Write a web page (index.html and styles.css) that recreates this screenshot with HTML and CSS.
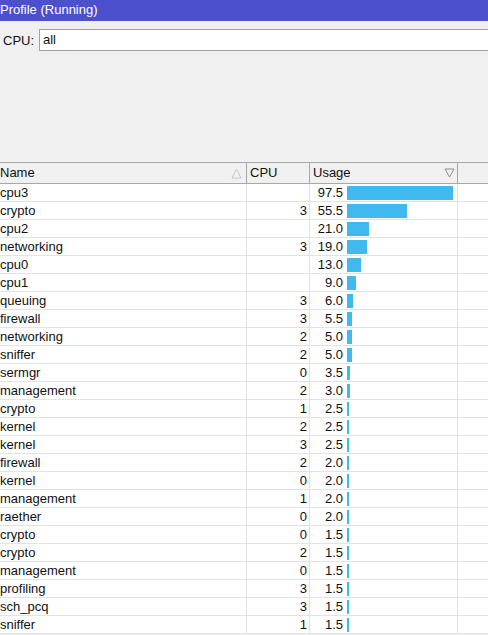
FILE: index.html
```html
<!DOCTYPE html>
<html lang="en">
<head>
    <meta charset="UTF-8">
    <meta name="viewport" content="width=device-width, initial-scale=1.0">
    <title>Profile (Running)</title>
    <link rel="stylesheet" href="styles.css">
</head>
<body>

    <!-- window title -->
    <div class="titlebar">Profile (Running)</div>

    <!-- cpu filter -->
    <div class="filter">
        <label for="cpu">CPU:</label>
        <div class="field" id="cpu">all</div>
    </div>

    <!-- profile table -->
    <div class="grid">
        <div class="head">
            <div class="cell name">Name
                <svg class="sort" width="11" height="11" viewBox="0 0 11 11"><path d="M5.5 1 L10 10 L1 10 Z" fill="none" stroke="#c9c9c9"/></svg>
            </div>
            <div class="cell">CPU</div>
            <div class="cell usage-head">Usage
                <svg class="sort" width="11" height="10" viewBox="0 0 11 10"><path d="M1 1 L10 1 L5.5 9 Z" fill="none" stroke="#8e8e8e"/></svg>
            </div>
            <div class="cell last"></div>
        </div>

        <div class="row"><div class="cell name">cpu3</div><div class="cell num"></div><div class="cell usage"><span class="val">97.5</span><span class="bar" style="width:106px"></span></div><div class="cell last"></div></div>
        <div class="row"><div class="cell name">crypto</div><div class="cell num">3</div><div class="cell usage"><span class="val">55.5</span><span class="bar" style="width:60px"></span></div><div class="cell last"></div></div>
        <div class="row"><div class="cell name">cpu2</div><div class="cell num"></div><div class="cell usage"><span class="val">21.0</span><span class="bar" style="width:22px"></span></div><div class="cell last"></div></div>
        <div class="row"><div class="cell name">networking</div><div class="cell num">3</div><div class="cell usage"><span class="val">19.0</span><span class="bar" style="width:20px"></span></div><div class="cell last"></div></div>
        <div class="row"><div class="cell name">cpu0</div><div class="cell num"></div><div class="cell usage"><span class="val">13.0</span><span class="bar" style="width:14px"></span></div><div class="cell last"></div></div>
        <div class="row"><div class="cell name">cpu1</div><div class="cell num"></div><div class="cell usage"><span class="val">9.0</span><span class="bar" style="width:9px"></span></div><div class="cell last"></div></div>
        <div class="row"><div class="cell name">queuing</div><div class="cell num">3</div><div class="cell usage"><span class="val">6.0</span><span class="bar" style="width:6px"></span></div><div class="cell last"></div></div>
        <div class="row"><div class="cell name">firewall</div><div class="cell num">3</div><div class="cell usage"><span class="val">5.5</span><span class="bar" style="width:5px"></span></div><div class="cell last"></div></div>
        <div class="row"><div class="cell name">networking</div><div class="cell num">2</div><div class="cell usage"><span class="val">5.0</span><span class="bar" style="width:5px"></span></div><div class="cell last"></div></div>
        <div class="row"><div class="cell name">sniffer</div><div class="cell num">2</div><div class="cell usage"><span class="val">5.0</span><span class="bar" style="width:5px"></span></div><div class="cell last"></div></div>
        <div class="row"><div class="cell name">sermgr</div><div class="cell num">0</div><div class="cell usage"><span class="val">3.5</span><span class="bar" style="width:3px"></span></div><div class="cell last"></div></div>
        <div class="row"><div class="cell name">management</div><div class="cell num">2</div><div class="cell usage"><span class="val">3.0</span><span class="bar" style="width:3px"></span></div><div class="cell last"></div></div>
        <div class="row"><div class="cell name">crypto</div><div class="cell num">1</div><div class="cell usage"><span class="val">2.5</span><span class="bar" style="width:2px"></span></div><div class="cell last"></div></div>
        <div class="row"><div class="cell name">kernel</div><div class="cell num">2</div><div class="cell usage"><span class="val">2.5</span><span class="bar" style="width:2px"></span></div><div class="cell last"></div></div>
        <div class="row"><div class="cell name">kernel</div><div class="cell num">3</div><div class="cell usage"><span class="val">2.5</span><span class="bar" style="width:2px"></span></div><div class="cell last"></div></div>
        <div class="row"><div class="cell name">firewall</div><div class="cell num">2</div><div class="cell usage"><span class="val">2.0</span><span class="bar" style="width:2px"></span></div><div class="cell last"></div></div>
        <div class="row"><div class="cell name">kernel</div><div class="cell num">0</div><div class="cell usage"><span class="val">2.0</span><span class="bar" style="width:2px"></span></div><div class="cell last"></div></div>
        <div class="row"><div class="cell name">management</div><div class="cell num">1</div><div class="cell usage"><span class="val">2.0</span><span class="bar" style="width:2px"></span></div><div class="cell last"></div></div>
        <div class="row"><div class="cell name">raether</div><div class="cell num">0</div><div class="cell usage"><span class="val">2.0</span><span class="bar" style="width:2px"></span></div><div class="cell last"></div></div>
        <div class="row"><div class="cell name">crypto</div><div class="cell num">0</div><div class="cell usage"><span class="val">1.5</span><span class="bar" style="width:2px"></span></div><div class="cell last"></div></div>
        <div class="row"><div class="cell name">crypto</div><div class="cell num">2</div><div class="cell usage"><span class="val">1.5</span><span class="bar" style="width:2px"></span></div><div class="cell last"></div></div>
        <div class="row"><div class="cell name">management</div><div class="cell num">0</div><div class="cell usage"><span class="val">1.5</span><span class="bar" style="width:2px"></span></div><div class="cell last"></div></div>
        <div class="row"><div class="cell name">profiling</div><div class="cell num">3</div><div class="cell usage"><span class="val">1.5</span><span class="bar" style="width:2px"></span></div><div class="cell last"></div></div>
        <div class="row"><div class="cell name">sch_pcq</div><div class="cell num">3</div><div class="cell usage"><span class="val">1.5</span><span class="bar" style="width:2px"></span></div><div class="cell last"></div></div>
        <div class="row"><div class="cell name">sniffer</div><div class="cell num">1</div><div class="cell usage"><span class="val">1.5</span><span class="bar" style="width:2px"></span></div><div class="cell last"></div></div>
    </div>

</body>
</html>
```

FILE: styles.css
```css
html, body {
    margin: 0;
    padding: 0;
    overflow: hidden;
}

body {
    font-family: "Liberation Sans", Arial, sans-serif;
    font-size: 13px;
    color: #111;
    background-color: #f0f0f0;
    height: 635px;
}

.titlebar {
    height: 21px;
    line-height: 20px;
    background-color: #4c50cc;
    color: #fff;
}

.filter {
    display: flex;
    align-items: center;
    margin-top: 8px;
    margin-right: -20px;
}

.filter label {
    margin-left: 3px;
    width: 36px;
}

.field {
    flex: 1;
    height: 20px;
    line-height: 20px;
    padding-left: 3px;
    background-color: #fff;
    border: 1px solid #a3a3a3;
}

/* table */
.grid {
    margin-top: 111px;
    background-color: #fff;
}

.head,
.row {
    display: grid;
    grid-template-columns: 247px 63px 148px 1fr;
}

.head {
    height: 20px;
    line-height: 20px;
    background-color: #f0f0f0;
    border-top: 1px solid #a8a8a8;
    border-bottom: 1px solid #a8a8a8;
}

.row {
    height: 17px;
    line-height: 17px;
    border-bottom: 1px solid #e3e3e3;
}

.cell {
    border-right: 1px solid #e3e3e3;
    white-space: nowrap;
    overflow: hidden;
}

.head .cell {
    border-right-color: #a8a8a8;
    padding-left: 3px;
    display: flex;
    align-items: center;
}

.head .cell.name {
    padding-left: 0;
}

.head .cell.last {
    border-right: none;
}

.row .cell.last {
    border-right: none;
}

.sort {
    margin-left: auto;
    margin-right: 4px;
}

.usage-head .sort {
    margin-right: 2px;
}

.num {
    text-align: right;
    padding-right: 2px;
}

.usage {
    display: flex;
    align-items: center;
}

.val {
    width: 33px;
    text-align: right;
}

.bar {
    height: 14px;
    margin-left: 4px;
    background-color: #3fb9ee;
}
```
